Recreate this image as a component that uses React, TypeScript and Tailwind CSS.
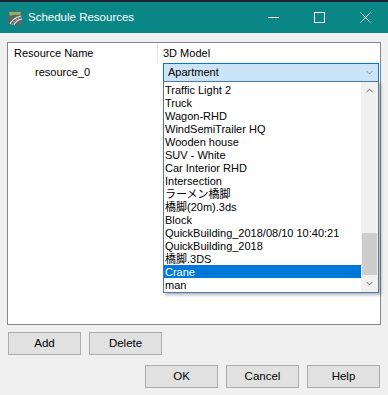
import { ChevronDown, ChevronUp } from 'lucide-react'

const models = [
  'Traffic Light 2',
  'Truck',
  'Wagon-RHD',
  'WindSemiTrailer HQ',
  'Wooden house',
  'SUV - White',
  'Car Interior RHD',
  'Intersection',
  'ラーメン橋脚',
  '橋脚(20m).3ds',
  'Block',
  'QuickBuilding_2018/08/10 10:40:21',
  'QuickBuilding_2018',
  '橋脚.3DS',
  'Crane',
  'man'
]

const selected = 'Crane'

function AppIcon() {
  return (
    <svg width="16" height="16" viewBox="0 0 16 16">
      <path d="M1 3 Q1 1 3 1 L15 1 L15 15 L3 15 Q1 15 1 13 Z" fill="#5b6466" />
      <path d="M2 2 L14 2 L13 5 Q7 4 3 6 Z" fill="#8fb36a" />
      <path d="M3 14 Q6 8 14 6" stroke="#e8e8e8" strokeWidth="1.2" fill="none" />
      <path d="M7 15 Q9 10 15 9" stroke="#e8e8e8" strokeWidth="1.2" fill="none" />
      <path d="M5 15 Q7.5 9 14.5 7.5" stroke="#d0d0d0" strokeWidth="0.8" strokeDasharray="1.5 1.5" fill="none" />
    </svg>
  )
}

function Button({ label }: { label: string }) {
  return (
    <button className="w-[73px] h-[23px] border border-[#adadad] bg-[#e1e1e1] text-[11.5px] text-black">
      {label}
    </button>
  )
}

export default function App() {
  return (
    <div className="w-[388px] h-[395px] overflow-hidden bg-[#f0f0f0] flex flex-col font-['Liberation_Sans','Noto_Sans_CJK_JP',sans-serif] text-[11px] text-black">
      <div className="h-[2px] bg-[#1c2230]" />

      {/* title bar */}
      <div className="h-[31px] bg-[#0b8686] flex items-center text-white">
        <div className="pl-[7px] pr-[5px] flex items-center">
          <AppIcon />
        </div>
        <span className="text-[11.5px] flex-1">Schedule Resources</span>
        <div className="w-[46px] h-full flex items-center justify-center">
          <div className="w-[11px] h-px bg-white" />
        </div>
        <div className="w-[46px] h-full flex items-center justify-center">
          <div className="w-[11px] h-[11px] border border-white" />
        </div>
        <div className="w-[46px] h-full flex items-center justify-center">
          <svg width="11" height="11" viewBox="0 0 11 11">
            <path d="M0.5 0.5 L10.5 10.5 M10.5 0.5 L0.5 10.5" stroke="white" strokeWidth="1" />
          </svg>
        </div>
      </div>

      <div className="px-[7px] pt-[9px] flex flex-col">
        {/* list view */}
        <div className="w-[374px] h-[283px] border border-[#828790] bg-white">
          <div className="flex h-[20px] items-center">
            <div className="w-[150px] h-full pl-[6px] flex items-center border-r border-[#e5e5e5]">Resource Name</div>
            <div className="pl-[5px]">3D Model</div>
          </div>
          <div className="flex h-[19px] items-center">
            <div className="w-[151px] pl-[27px]">resource_0</div>
            <div className="relative ml-[4px] w-[216px] h-[19px] border border-[#0078d7] bg-[#cce4f7] flex items-center pl-[4px]">
              <span className="flex-1">Apartment</span>
              <ChevronDown size={11} strokeWidth={1.5} className="text-[#666] mr-[3px]" />

              {/* dropdown */}
              <div className="absolute left-[-1px] top-full w-[216px] h-[212px] border border-[#4f79a6] bg-white flex shadow-[2px_2px_3px_rgba(0,0,0,0.3)] z-10">
                <div className="flex-1 flex flex-col pt-px">
                  {models.map((m) => (
                    <div
                      key={m}
                      className={
                        m === selected
                          ? 'h-[13px] leading-[14px] pl-[1px] bg-[#0078d7] text-white whitespace-nowrap'
                          : 'h-[13px] leading-[14px] pl-[1px] whitespace-nowrap'
                      }
                    >
                      {m}
                    </div>
                  ))}
                </div>
                <div className="w-[17px] bg-[#f0f0f0] flex flex-col">
                  <div className="h-[17px] flex items-center justify-center">
                    <ChevronUp size={11} strokeWidth={2} className="text-[#606060]" />
                  </div>
                  <div className="flex-1 flex flex-col justify-end">
                    <div className="h-[42px] mx-[1px] bg-[#cdcdcd]" />
                  </div>
                  <div className="h-[17px] flex items-center justify-center">
                    <ChevronDown size={11} strokeWidth={2} className="text-[#606060]" />
                  </div>
                </div>
              </div>
            </div>
          </div>
        </div>

        <div className="mt-[7px] pl-px flex gap-[8px]">
          <Button label="Add" />
          <Button label="Delete" />
        </div>

        <div className="mt-[10px] pr-px flex justify-end gap-[8px]">
          <Button label="OK" />
          <Button label="Cancel" />
          <Button label="Help" />
        </div>
      </div>
    </div>
  )
}
